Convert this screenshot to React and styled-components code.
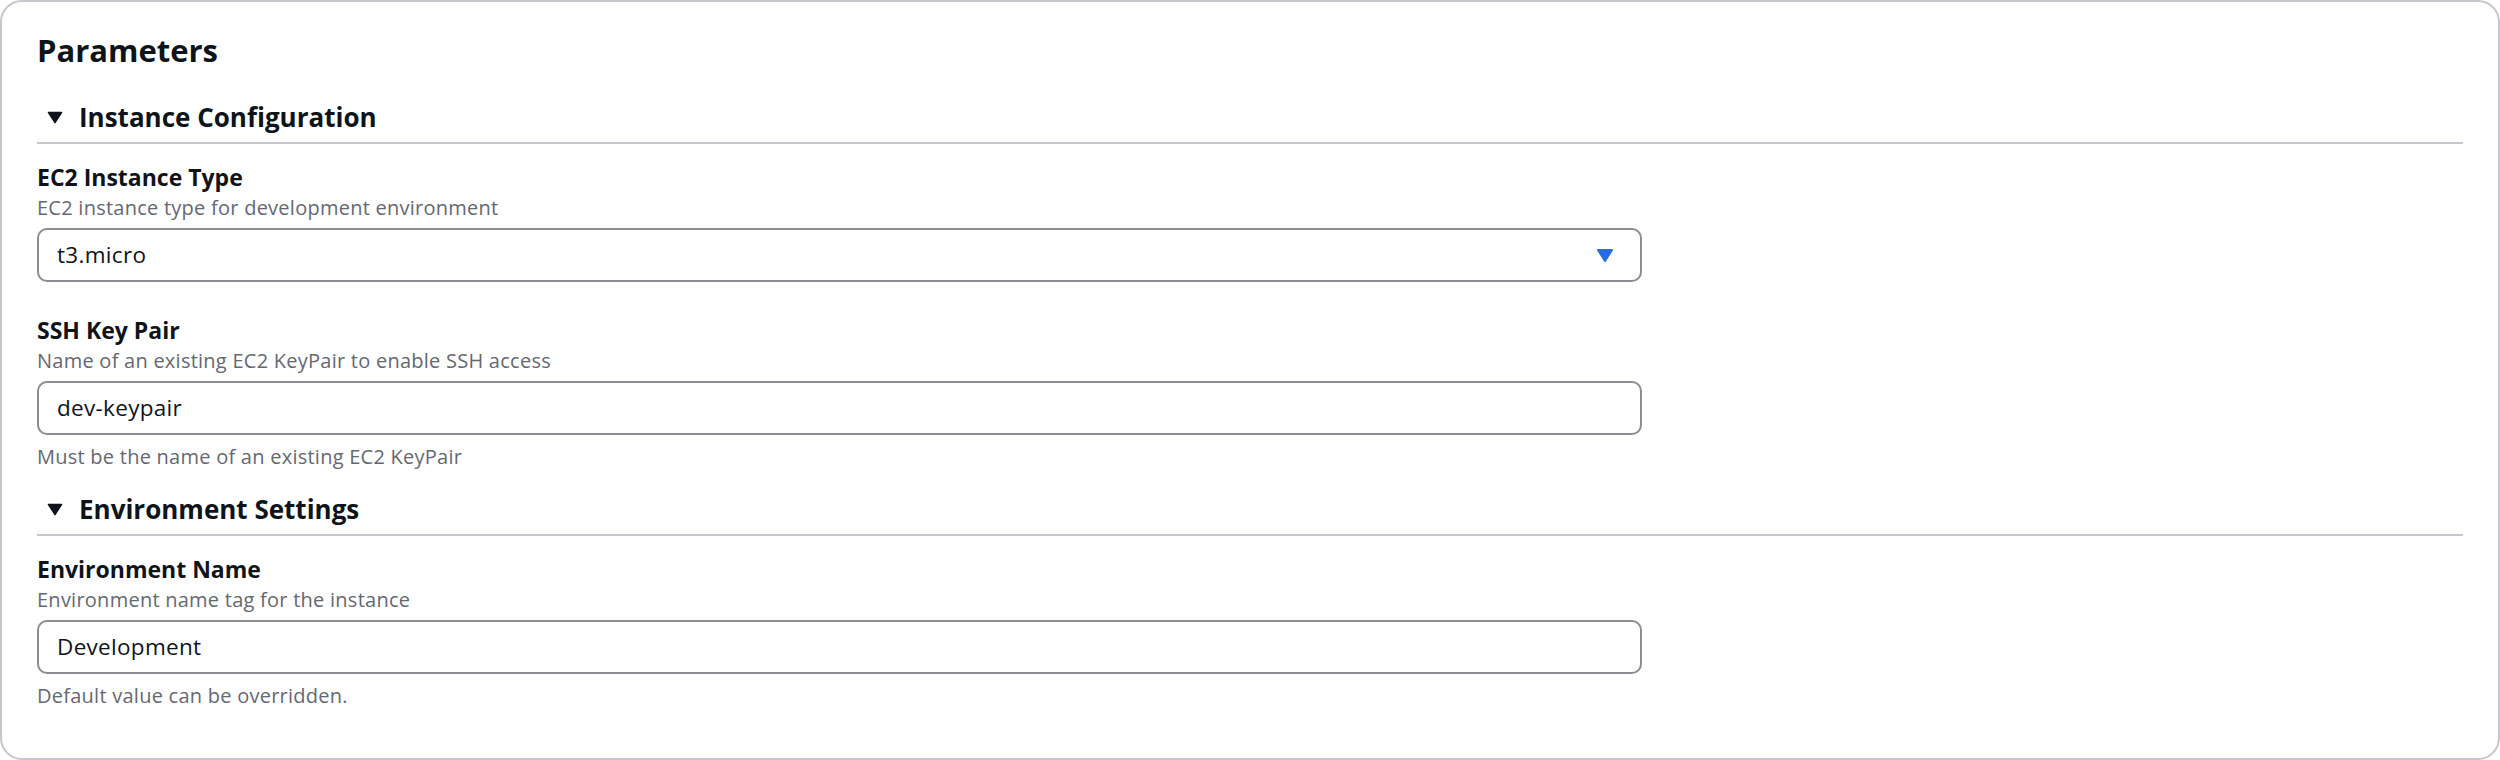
import React from "react";
import styled, { createGlobalStyle } from "styled-components";

const GlobalStyle = createGlobalStyle`
  html, body {
    margin: 0;
    padding: 0;
    background: #ffffff;
  }
  body {
    font-family: "Open Sans", "Noto Sans", sans-serif;
    color: #0f141a;
  }
  * {
    box-sizing: border-box;
  }
`;

const sections = [
  {
    title: "Instance Configuration",
    fields: [
      {
        label: "EC2 Instance Type",
        description: "EC2 instance type for development environment",
        value: "t3.micro",
        select: true,
      },
      {
        label: "SSH Key Pair",
        description: "Name of an existing EC2 KeyPair to enable SSH access",
        value: "dev-keypair",
        hint: "Must be the name of an existing EC2 KeyPair",
      },
    ],
  },
  {
    title: "Environment Settings",
    fields: [
      {
        label: "Environment Name",
        description: "Environment name tag for the instance",
        value: "Development",
        hint: "Default value can be overridden.",
      },
    ],
  },
];

function Caret() {
  return (
    <svg width="16" height="13" viewBox="0 0 16 13">
      <path d="M1.5 1.5 L14.5 1.5 L8 11.5 Z" fill="#0f141a" stroke="#0f141a" strokeWidth="1.5" strokeLinejoin="round" />
    </svg>
  );
}

function SelectCaret() {
  return (
    <svg width="18" height="15" viewBox="0 0 18 15">
      <path d="M2 2 L16 2 L9 13 Z" fill="#2a6be0" stroke="#2a6be0" strokeWidth="2" strokeLinejoin="round" />
    </svg>
  );
}

function Field({ label, description, value, hint, select }) {
  return (
    <FieldWrap>
      <Label>{label}</Label>
      <Description>{description}</Description>
      <Control>
        <ControlValue>{value}</ControlValue>
        {select && <SelectCaret />}
      </Control>
      {hint && <Hint>{hint}</Hint>}
    </FieldWrap>
  );
}

export default function App() {
  return (
    <>
      <GlobalStyle />
      <Card>
        <Title>Parameters</Title>
        {sections.map((section) => (
          <Section key={section.title}>
            <SectionHeader>
              <Caret />
              <span>{section.title}</span>
            </SectionHeader>
            <Fields>
              {section.fields.map((f) => (
                <Field key={f.label} {...f} />
              ))}
            </Fields>
          </Section>
        ))}
      </Card>
    </>
  );
}

const Card = styled.div`
  width: 2500px;
  height: 760px;
  border: 2px solid #c6c6cd;
  border-radius: 22px;
  padding: 29px 35px 0 35px;
  background: #ffffff;
  display: flex;
  flex-direction: column;
`;

const Title = styled.h2`
  margin: 0 0 32px 0;
  font-size: 31px;
  line-height: 38px;
  font-weight: 700;
  color: #0f141a;
`;

const Section = styled.section`
  display: flex;
  flex-direction: column;

  & + & {
    margin-top: 24px;
  }
`;

const SectionHeader = styled.h3`
  margin: 0;
  display: flex;
  align-items: center;
  gap: 16px;
  padding: 0 0 9px 10px;
  border-bottom: 2px solid #c6c6cd;
  font-size: 26px;
  line-height: 32px;
  font-weight: 700;
  color: #0f141a;
`;

const Fields = styled.div`
  display: flex;
  flex-direction: column;
  gap: 33.5px;
  padding-top: 18.5px;
`;

const FieldWrap = styled.div`
  display: flex;
  flex-direction: column;
`;

const Label = styled.label`
  font-size: 23px;
  line-height: 28px;
  font-weight: 700;
  color: #0f141a;
`;

const Description = styled.div`
  margin: 5px 0 8.5px 0;
  font-size: 20px;
  line-height: 24px;
  letter-spacing: 0.25px;
  color: #656871;
`;

const Control = styled.div`
  width: 1605px;
  height: 54px;
  display: flex;
  align-items: center;
  justify-content: space-between;
  padding: 0 26px 0 18px;
  border: 2px solid #8c8c94;
  border-radius: 10px;
  background: #ffffff;
`;

const ControlValue = styled.span`
  font-size: 22.5px;
  line-height: 28px;
  letter-spacing: 0.3px;
  color: #0f141a;
`;

const Hint = styled.div`
  margin-top: 10px;
  font-size: 20px;
  line-height: 24px;
  letter-spacing: 0.25px;
  color: #656871;
`;
